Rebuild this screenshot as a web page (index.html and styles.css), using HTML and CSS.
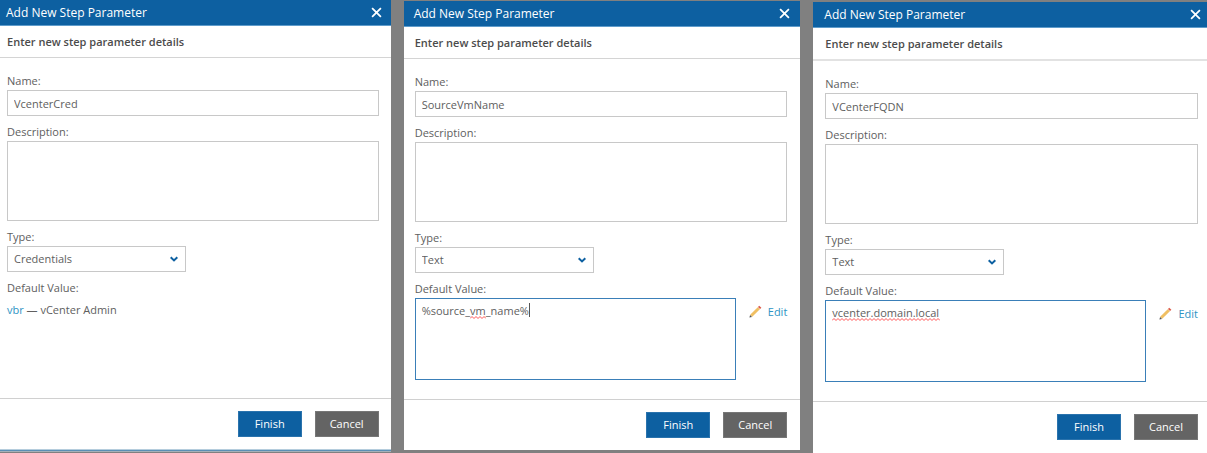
FILE: index.html
```html
<!DOCTYPE html>
<html lang="en">
<head>
<meta charset="utf-8">
<title>Add New Step Parameter</title>
<link rel="stylesheet" href="styles.css">
</head>
<body>
<main class="board">
  <section class="dialog dialog-cred" aria-labelledby="t1">
    <header class="titlebar">
      <h2 class="title" id="t1">Add New Step Parameter</h2>
      <button class="close" type="button" aria-label="Close"><svg viewBox="0 0 10 10"><path d="M1 1l8 8M9 1l-8 8"/></svg></button>
    </header>
    <p class="subtitle">Enter new step parameter details</p>
    <form class="form">
      <div class="field"><label for="name1">Name:</label><input class="control" id="name1" type="text" value="VcenterCred"></div>
      <div class="field"><label for="desc1">Description:</label><textarea class="control description" id="desc1"></textarea></div>
      <div class="field"><label for="type1">Type:</label>
        <div class="select"><select class="control" id="type1"><option>Credentials</option><option>Text</option></select><svg class="chevron" viewBox="0 0 8 6"><path d="M.7 1.200L4 4.400l3.300-3.200"/></svg></div>
      </div>
      <div class="field"><span class="label">Default Value:</span><p class="credential"><a class="link" href="#">vbr</a> — vCenter Admin</p></div>
    </form>
    <footer class="actions"><button class="btn primary" type="button">Finish</button><button class="btn" type="button">Cancel</button></footer>
  </section>

  <section class="dialog dialog-source" aria-labelledby="t2">
    <header class="titlebar">
      <h2 class="title" id="t2">Add New Step Parameter</h2>
      <button class="close" type="button" aria-label="Close"><svg viewBox="0 0 10 10"><path d="M1 1l8 8M9 1l-8 8"/></svg></button>
    </header>
    <p class="subtitle">Enter new step parameter details</p>
    <form class="form">
      <div class="field"><label for="name2">Name:</label><input class="control" id="name2" type="text" value="SourceVmName"></div>
      <div class="field"><label for="desc2">Description:</label><textarea class="control description" id="desc2"></textarea></div>
      <div class="field"><label for="type2">Type:</label>
        <div class="select"><select class="control" id="type2"><option>Text</option><option>Credentials</option></select><svg class="chevron" viewBox="0 0 8 6"><path d="M.7 1.200L4 4.400l3.300-3.200"/></svg></div>
      </div>
      <div class="field"><label for="value2">Default Value:</label>
        <div class="value-row">
          <div class="value-box">
            <textarea class="control value" id="value2" spellcheck="false">%source_vm_name%</textarea>
            <svg class="squiggle squiggle-word" viewBox="0 0 16 3"><path d="M0 2.5L2 .5l2 2 2-2 2 2 2-2 2 2 2-2 2 2"/></svg>
            <span class="caret"></span>
          </div>
          <a class="link edit" href="#"><svg class="pencil" viewBox="0 0 13 13"><path class="wood" d="M2.2 10.8l7.6-7.6"/><path class="eraser" d="M10 3l1.300-1.300"/><path class="lead" d="M.4 12.600l.7-2.600 1.900 1.900z"/></svg>Edit</a>
        </div>
      </div>
    </form>
    <footer class="actions"><button class="btn primary" type="button">Finish</button><button class="btn" type="button">Cancel</button></footer>
  </section>

  <section class="dialog dialog-fqdn" aria-labelledby="t3">
    <header class="titlebar">
      <h2 class="title" id="t3">Add New Step Parameter</h2>
      <button class="close" type="button" aria-label="Close"><svg viewBox="0 0 10 10"><path d="M1 1l8 8M9 1l-8 8"/></svg></button>
    </header>
    <p class="subtitle">Enter new step parameter details</p>
    <form class="form">
      <div class="field"><label for="name3">Name:</label><input class="control" id="name3" type="text" value="VCenterFQDN"></div>
      <div class="field"><label for="desc3">Description:</label><textarea class="control description" id="desc3"></textarea></div>
      <div class="field"><label for="type3">Type:</label>
        <div class="select"><select class="control" id="type3"><option>Text</option><option>Credentials</option></select><svg class="chevron" viewBox="0 0 8 6"><path d="M.7 1.200L4 4.400l3.300-3.200"/></svg></div>
      </div>
      <div class="field"><label for="value3">Default Value:</label>
        <div class="value-row">
          <div class="value-box">
            <textarea class="control value" id="value3" spellcheck="false">vcenter.domain.local</textarea>
            <svg class="squiggle squiggle-line" viewBox="0 0 108 3"><path d="M0 2.5L2 .5l2 2 2-2 2 2 2-2 2 2 2-2 2 2 2-2 2 2 2-2 2 2 2-2 2 2 2-2 2 2 2-2 2 2 2-2 2 2 2-2 2 2 2-2 2 2 2-2 2 2 2-2 2 2 2-2 2 2 2-2 2 2 2-2 2 2 2-2 2 2 2-2 2 2 2-2 2 2 2-2 2 2 2-2 2 2 2-2 2 2 2-2 2 2 2-2 2 2 2-2 2 2 2-2 2 2"/></svg>
          </div>
          <a class="link edit" href="#"><svg class="pencil" viewBox="0 0 13 13"><path class="wood" d="M2.2 10.8l7.6-7.6"/><path class="eraser" d="M10 3l1.300-1.300"/><path class="lead" d="M.4 12.600l.7-2.600 1.900 1.900z"/></svg>Edit</a>
        </div>
      </div>
    </form>
    <footer class="actions"><button class="btn primary" type="button">Finish</button><button class="btn" type="button">Cancel</button></footer>
  </section>
</main>
</body>
</html>
```
FILE: styles.css
```css
* { box-sizing: border-box; }

body {
  margin: 0;
  background: #808080;
  color: #606060;
  font: 11px/16px "Open Sans", "Noto Sans", sans-serif;
}

.board {
  display: grid;
  grid-template-columns: 391fr 397fr 394fr;
  gap: 13px;
  min-height: 100vh;
  align-items: start;
}

.dialog {
  --left: 7px;
  --right: 12px;
  display: flex;
  flex-direction: column;
  background: #fff;
}
.dialog-cred {
  padding-bottom: 1px;
  border-bottom: 1px solid #5b8fb5;
  box-shadow: inset 0 -1px #b5cddd, 0 1px #a5b0b8;
}
.dialog-source { --left: 11px; --right: 13px; margin-top: 1px; }
.dialog-fqdn { --left: 12px; --right: 9px; margin-top: 2px; align-self: stretch; }

.titlebar {
  display: flex;
  align-items: center;
  justify-content: space-between;
  height: 26px;
  padding: 0 calc(var(--right) - 3px) 0 calc(var(--left) - 1px);
  background: #0d60a1;
  border-bottom: 1px solid #5f9ccb;
}
.title { margin: 0; color: #fff; font-size: 12px; font-weight: 400; }
.close { display: flex; padding: 0; border: 0; background: none; }
.close svg { width: 11px; height: 11px; fill: none; stroke: #fff; stroke-width: 1.6; }

.subtitle {
  margin: 0;
  padding: 8px var(--right) 7px var(--left);
  border-bottom: 1px solid #d4d4d4;
  color: #4c4c4c;
  font-weight: 600;
}
.dialog-fqdn .subtitle { border-bottom: 2px solid #e2e2e2; }

.form {
  display: flex;
  flex-direction: column;
  gap: 8px;
  padding: 15px var(--right) 19px var(--left);
}
.field { display: flex; flex-direction: column; gap: 1px; }

.control {
  display: block;
  width: 100%;
  height: 26px;
  margin: 0;
  padding: 0 6px;
  border: 1px solid #c8c8c8;
  border-radius: 0;
  outline: 0;
  background: #fff;
  color: #606060;
  font: inherit;
  resize: none;
  appearance: none;
}
.description { height: 80px; padding-top: 4px; }
.select { position: relative; width: 179px; }
.chevron {
  position: absolute;
  top: 10px;
  right: 8px;
  width: 8px;
  height: 6px;
  fill: none;
  stroke: #0d60a1;
  stroke-width: 2;
}

.credential { height: 82px; margin: 0; padding-top: 5px; }
.link { color: #2e94c4; text-decoration: none; }

.value-row { display: flex; gap: 13px; }
.value-box { position: relative; flex: 1; }
.value { height: 82px; padding-top: 4px; border-color: #3a7fb8; }
.edit { display: flex; align-items: center; gap: 6px; height: 27px; }

.squiggle { position: absolute; top: 18px; height: 3px; fill: none; stroke: #f55; }
.squiggle-word { left: 55px; width: 16px; }
.squiggle-line { left: 7px; width: 108px; }
.caret { position: absolute; top: 5px; left: 114px; width: 1px; height: 14px; background: #555; }

.pencil { width: 13px; height: 13px; fill: none; stroke-width: 3; }
.wood { stroke: #f0bf62; }
.eraser { stroke: #dc5a48; }
.lead { fill: #555; }

.actions {
  display: flex;
  justify-content: flex-end;
  gap: 13px;
  padding: 12px var(--right) 12px var(--left);
  border-top: 1px solid #d0d0d0;
}
.btn {
  width: 64px;
  height: 26px;
  padding: 0;
  border: 1px solid #777;
  background: #646464;
  color: #fff;
  font: inherit;
  font-weight: 500;
}
.primary { border-color: #2a73ad; background: #0d60a1; }
```
